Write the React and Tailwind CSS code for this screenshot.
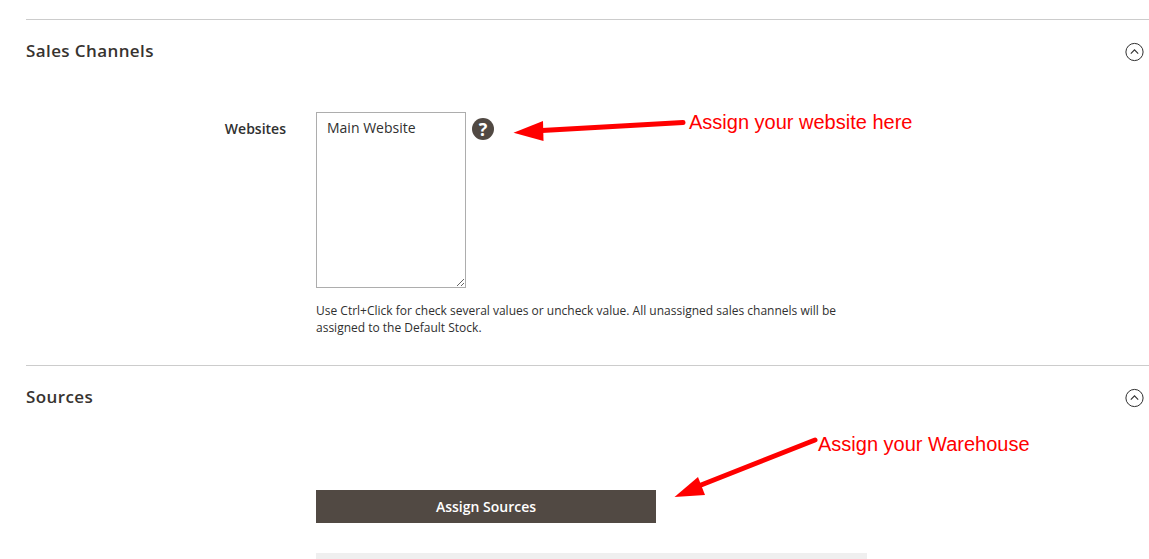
const FONT = "font-['Open_Sans',sans-serif]";

function CollapseIcon() {
  return (
    <svg width="20" height="20" viewBox="0 0 20 20" fill="none" stroke="#303030" className="mt-[3px] shrink-0">
      <circle cx="9.5" cy="10" r="8.6" strokeWidth="1" />
      <path d="M5.8 11.6 L9.5 7.9 L13.2 11.6" strokeWidth="1.1" />
    </svg>
  );
}

function SectionHeader({ title }) {
  return (
    <div className="flex items-start justify-between pr-[4px]">
      <h2 className="text-[17px] leading-[24px] font-semibold tracking-[0.4px] text-[#373330]">{title}</h2>
      <CollapseIcon />
    </div>
  );
}

function Annotation({ className, children }) {
  return (
    <span className={`absolute font-['Liberation_Sans',sans-serif] text-[20px] leading-[24px] text-[#ff0000] whitespace-nowrap ${className}`}>
      {children}
    </span>
  );
}

export default function App() {
  return (
    <div className={`relative h-[559px] w-[1149px] overflow-hidden bg-white pl-[26px] pt-[19px] ${FONT}`}>
      <section className="border-t border-[#cccccc] pt-[19px]">
        <SectionHeader title="Sales Channels" />

        <div className="mt-[49px] flex">
          <label className="w-[260px] pt-[8px] text-right text-[14px] leading-[18px] font-semibold text-[#303030]">
            Websites
          </label>
          <div className="ml-[30px] w-[520px]">
            <div className="flex items-start">
              <textarea
                readOnly
                defaultValue="Main Website"
                className="h-[176px] w-[150px] border border-[#adadad] bg-white px-[10px] py-[6px] text-[14px] leading-[18px] text-[#303030] outline-none"
              />
              <span className="ml-[6px] mt-[6px] flex h-[22px] w-[22px] items-center justify-center rounded-full bg-[#514943] text-[18px] leading-none font-bold text-white">
                ?
              </span>
            </div>
            <p className="mt-[14px] text-[12px] leading-[17px] text-[#303030]">
              Use Ctrl+Click for check several values or uncheck value. All unassigned sales channels will be assigned to the Default Stock.
            </p>
          </div>
        </div>
      </section>

      <section className="mt-[29px] border-t border-[#cccccc] pt-[19px]">
        <SectionHeader title="Sources" />

        <div className="ml-[290px] mt-[81px]">
          <button className="block h-[33px] w-[340px] bg-[#514943] text-center text-[14px] font-semibold text-white">
            Assign Sources
          </button>
          <div className="mt-[30px] h-[10px] w-[551px] bg-[#efefef]" />
        </div>
      </section>

      {/* red markup drawn over the screenshot */}
      <svg className="absolute left-0 top-0" width="1149" height="559" fill="#ff0000" stroke="none">
        <path d="M683 122.5 L542 130.5" stroke="#ff0000" strokeWidth="5" strokeLinecap="round" />
        <path d="M513.5 132.8 L543 121 L543.5 141 Z" />
        <path d="M815 440 L696 487" stroke="#ff0000" strokeWidth="5" strokeLinecap="round" />
        <path d="M674.5 497 L698 477 L705 495 Z" />
      </svg>
      <Annotation className="left-[689px] top-[110px]">Assign your website here</Annotation>
      <Annotation className="left-[818px] top-[432px]">Assign your Warehouse</Annotation>
    </div>
  );
}
